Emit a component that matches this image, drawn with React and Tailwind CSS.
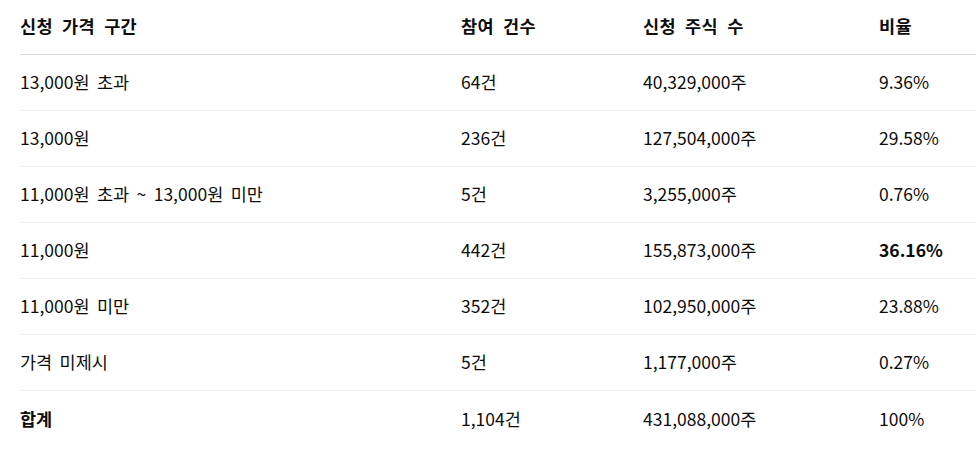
export default function App() {
  const rows = [
    ["13,000원 초과", "64건", "40,329,000주", "9.36%", false, false],
    ["13,000원", "236건", "127,504,000주", "29.58%", false, false],
    ["11,000원 초과 ~ 13,000원 미만", "5건", "3,255,000주", "0.76%", false, false],
    ["11,000원", "442건", "155,873,000주", "36.16%", false, true],
    ["11,000원 미만", "352건", "102,950,000주", "23.88%", false, false],
    ["가격 미제시", "5건", "1,177,000주", "0.27%", false, false],
    ["합계", "1,104건", "431,088,000주", "100%", true, false],
  ];
  const font = { fontFamily: '"Noto Sans CJK KR", "Noto Sans", sans-serif' };
  return (
    <div className="w-[976px] h-[451px] bg-white pl-5 text-[#0d0d0d] text-[17.5px] [word-spacing:3.5px] overflow-hidden" style={font}>
      <div className="grid grid-cols-[441px_182px_236px_1fr] h-[55px] items-center font-bold border-b border-[#d9d9d9] pb-[2px] [word-spacing:5px] tracking-[0.3px]">
        <div>신청 가격 구간</div>
        <div>참여 건수</div>
        <div>신청 주식 수</div>
        <div>비율</div>
      </div>
      {rows.map((r, i) => (
        <div
          key={i}
          className={
            "grid grid-cols-[441px_182px_236px_1fr] h-[56px] items-center " +
            (i < rows.length - 1 ? "border-b border-[#ececec]" : "")
          }
        >
          <div className={r[4] ? "font-bold" : ""}>{r[0]}</div>
          <div>{r[1]}</div>
          <div>{r[2]}</div>
          <div className={r[5] ? "font-bold" : ""}>{r[3]}</div>
        </div>
      ))}
    </div>
  );
}
